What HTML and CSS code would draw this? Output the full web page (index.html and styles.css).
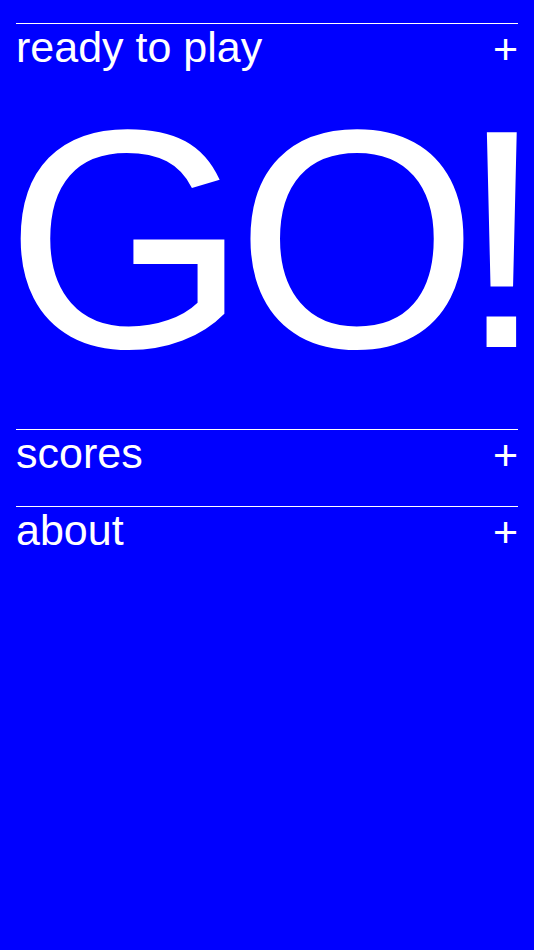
FILE: index.html
```html
<!DOCTYPE html>
<html lang="en">
  <head>
    <meta charset="utf-8" />
    <title>GO!</title>
    <link rel="stylesheet" href="styles.css">
  </head>
  <body>
    <div class="menu">
      <div class="row first">
        <div class="head">
          <span class="label">ready to play</span>
          <span class="plus">+</span>
        </div>
        <div class="go">GO<span class="bang">!</span></div>
      </div>
      <div class="row">
        <div class="head">
          <span class="label">scores</span>
          <span class="plus">+</span>
        </div>
      </div>
      <div class="row">
        <div class="head">
          <span class="label">about</span>
          <span class="plus">+</span>
        </div>
      </div>
    </div>
  </body>
</html>
```

FILE: styles.css
```css
html, body {
  margin: 0;
  padding: 0;
  background-color: #0000ff;
  color: #fff;
  font-family: "Liberation Sans", Arial, Helvetica, sans-serif;
}
body {
  min-height: 950px;
}
.menu {
  display: flex;
  flex-flow: column;
  padding: 23px 16px 0 16px;
}
.row {
  border-top: 1px solid #fff;
  padding-bottom: 31px;
}
.row.first {
  padding-bottom: 34px;
}
.head {
  display: flex;
  justify-content: space-between;
  align-items: baseline;
  padding-top: 2px;
  font-size: 43px;
  line-height: 43px;
}
.plus {
  position: relative;
  top: 2px;
}
.go {
  font-size: 312px;
  line-height: 312px;
  letter-spacing: -12px;
  margin-left: -11px;
  margin-top: 14px;
  white-space: nowrap;
}
.bang {
  margin-left: -8px;
}
```
